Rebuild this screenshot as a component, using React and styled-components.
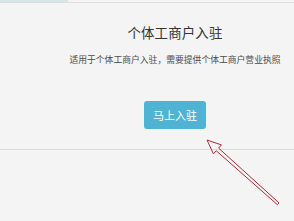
import React from "react";
import styled, { createGlobalStyle } from "styled-components";

const GlobalStyle = createGlobalStyle`
  html, body {
    margin: 0;
    padding: 0;
    background: #f4f4f4;
    font-family: "Noto Sans CJK SC", "Liberation Sans", sans-serif;
  }
`;

const Page = styled.div`
  position: relative;
  width: 294px;
  height: 221px;
  overflow: hidden;
  background: #f4f4f4;
`;

const TopStrip = styled.div`
  display: flex;
  height: 2px;
  border-bottom: 1px solid #dedede;
  span {
    width: 68px;
    background: #d6e6ee;
  }
`;

const Panel = styled.div`
  display: flex;
  flex-direction: column;
  align-items: center;
  padding-left: 56px;
`;

const Title = styled.h2`
  margin: 19px 0 0;
  font-size: 13.4px;
  line-height: 20px;
  font-weight: 400;
  color: #333;
  letter-spacing: 0.2px;
`;

const Subtitle = styled.p`
  margin: 12px 0 0;
  font-size: 8.8px;
  line-height: 12px;
  color: #4a4a4a;
  white-space: nowrap;
`;

const JoinButton = styled.button`
  margin-top: 35px;
  width: 62px;
  height: 28px;
  border: none;
  border-radius: 3px;
  background: #4fb4d4;
  color: #fff;
  font-family: inherit;
  font-size: 11px;
  cursor: pointer;
`;

const Divider = styled.div`
  margin-top: 20px;
  height: 1px;
  background: #dcdcdc;
`;

const Arrow = styled.svg`
  position: absolute;
  left: 0;
  top: 0;
  pointer-events: none;
`;

export default function App() {
  return (
    <>
      <GlobalStyle />
      <Page>
        <TopStrip>
          <span />
        </TopStrip>
        <Panel>
          <Title>个体工商户入驻</Title>
          <Subtitle>适用于个体工商户入驻，需要提供个体工商户营业执照</Subtitle>
          <JoinButton>马上入驻</JoinButton>
        </Panel>
        <Divider />
        <Arrow width="294" height="221" viewBox="0 0 294 221">
          <polygon
            points="207,140 221.4,144.9 218.6,148.1 279,202.9 277.4,204.7 216.2,150.7 213.4,153.9"
            fill="none"
            stroke="#b02c38"
            strokeWidth="1"
            strokeLinejoin="miter"
          />
        </Arrow>
      </Page>
    </>
  );
}
